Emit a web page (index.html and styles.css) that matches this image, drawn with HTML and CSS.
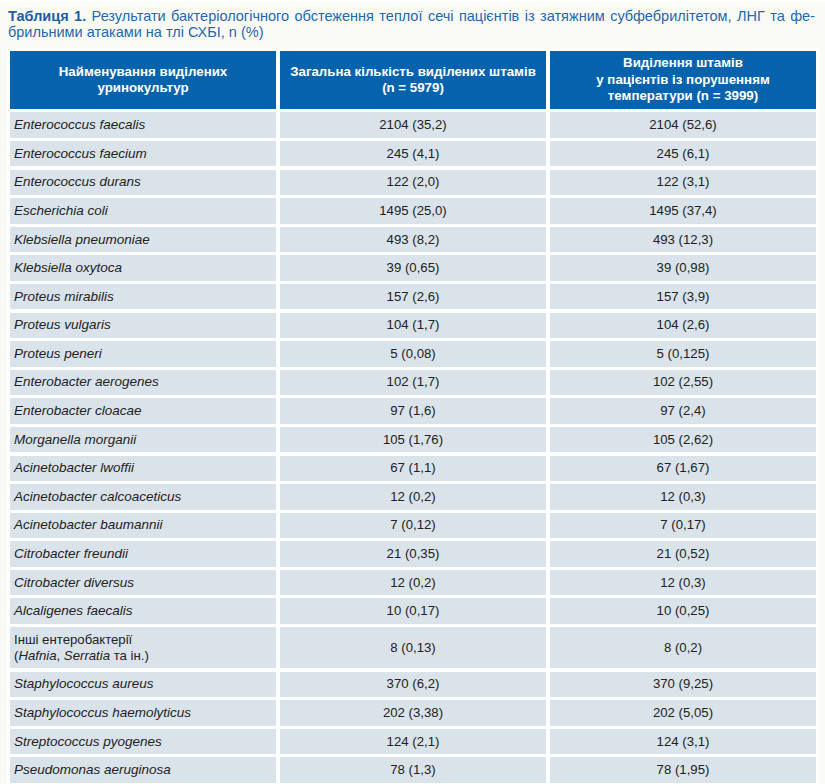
FILE: index.html
```html
<!DOCTYPE html>
<html lang="uk">
<head>
<meta charset="utf-8">
<title>Таблиця 1</title>
<link rel="stylesheet" href="styles.css">
</head>
<body>
<div class="page">
  <div class="caption">
    <span class="line1"><b>Таблиця 1.</b> Результати бактеріологічного обстеження теплої сечі пацієнтів із затяжним субфебрилітетом, ЛНГ та фе-</span>
    <span class="line2">брильними атаками на тлі СХБІ, n (%)</span>
  </div>
  <div class="table">
    <div class="th">Найменування виділених<br>уринокультур</div>
    <div class="th">Загальна кількість виділених штамів<br>(n = 5979)</div>
    <div class="th">Виділення штамів<br>у пацієнтів із порушенням<br>температури (n = 3999)</div>

    <div class="td name">Enterococcus faecalis</div><div class="td">2104 (35,2)</div><div class="td">2104 (52,6)</div>
    <div class="td name">Enterococcus faecium</div><div class="td">245 (4,1)</div><div class="td">245 (6,1)</div>
    <div class="td name">Enterococcus durans</div><div class="td">122 (2,0)</div><div class="td">122 (3,1)</div>
    <div class="td name">Escherichia coli</div><div class="td">1495 (25,0)</div><div class="td">1495 (37,4)</div>
    <div class="td name">Klebsiella pneumoniae</div><div class="td">493 (8,2)</div><div class="td">493 (12,3)</div>
    <div class="td name">Klebsiella oxytoca</div><div class="td">39 (0,65)</div><div class="td">39 (0,98)</div>
    <div class="td name">Proteus mirabilis</div><div class="td">157 (2,6)</div><div class="td">157 (3,9)</div>
    <div class="td name">Proteus vulgaris</div><div class="td">104 (1,7)</div><div class="td">104 (2,6)</div>
    <div class="td name">Proteus peneri</div><div class="td">5 (0,08)</div><div class="td">5 (0,125)</div>
    <div class="td name">Enterobacter aerogenes</div><div class="td">102 (1,7)</div><div class="td">102 (2,55)</div>
    <div class="td name">Enterobacter cloacae</div><div class="td">97 (1,6)</div><div class="td">97 (2,4)</div>
    <div class="td name">Morganella morganii</div><div class="td">105 (1,76)</div><div class="td">105 (2,62)</div>
    <div class="td name">Acinetobacter lwoffii</div><div class="td">67 (1,1)</div><div class="td">67 (1,67)</div>
    <div class="td name">Acinetobacter calcoaceticus</div><div class="td">12 (0,2)</div><div class="td">12 (0,3)</div>
    <div class="td name">Acinetobacter baumannii</div><div class="td">7 (0,12)</div><div class="td">7 (0,17)</div>
    <div class="td name">Citrobacter freundii</div><div class="td">21 (0,35)</div><div class="td">21 (0,52)</div>
    <div class="td name">Citrobacter diversus</div><div class="td">12 (0,2)</div><div class="td">12 (0,3)</div>
    <div class="td name">Alcaligenes faecalis</div><div class="td">10 (0,17)</div><div class="td">10 (0,25)</div>
    <div class="td name plain"><span>Інші ентеробактерії<br>(<i>Hafnia</i>, <i>Serratia</i> та ін.)</span></div><div class="td">8 (0,13)</div><div class="td">8 (0,2)</div>
    <div class="td name">Staphylococcus aureus</div><div class="td">370 (6,2)</div><div class="td">370 (9,25)</div>
    <div class="td name">Staphylococcus haemolyticus</div><div class="td">202 (3,38)</div><div class="td">202 (5,05)</div>
    <div class="td name">Streptococcus pyogenes</div><div class="td">124 (2,1)</div><div class="td">124 (3,1)</div>
    <div class="td name">Pseudomonas aeruginosa</div><div class="td">78 (1,3)</div><div class="td">78 (1,95)</div>
  </div>
</div>
</body>
</html>
```

FILE: styles.css
```css
html, body {
  margin: 0;
  padding: 0;
  background: #fbfbf5;
}

.page {
  width: 825px;
  height: 784px;
  overflow: hidden;
  border-top: 2px solid #ffffff;
  box-sizing: border-box;
}

.caption {
  margin: 6px 10px 0 8px;
  font-family: "Liberation Sans", Arial, sans-serif;
  font-size: 14.5px;
  line-height: 16px;
  color: #2367b0;
  height: 40px;
}

.caption span {
  display: block;
}

.line1 {
  text-align: justify;
  text-align-last: justify;
}

.caption b {
  color: #1a5ea6;
}

.table {
  margin-left: 7px;
  width: 812px;
  box-sizing: border-box;
  padding: 3px;
  background: #ffffff;
  display: grid;
  grid-template-columns: 266px 266px 266px;
  grid-template-rows: 58.3px repeat(18, 25.5px) 41.4px repeat(4, 25.5px);
  column-gap: 4px;
  row-gap: 3.1px;
  font-family: "Liberation Sans", Arial, sans-serif;
}

.th {
  background: #0563ad;
  color: #ffffff;
  font-weight: bold;
  font-size: 13.3px;
  line-height: 16.5px;
  text-align: center;
  display: flex;
  align-items: center;
  justify-content: center;
}

.td {
  background: #dae3ea;
  color: #222222;
  font-size: 13.2px;
  line-height: 16px;
  display: flex;
  align-items: center;
  justify-content: center;
}

.name {
  justify-content: flex-start;
  padding-left: 4px;
  font-style: italic;
  font-size: 13.5px;
}

.plain {
  font-style: normal;
  font-size: 13.2px;
}
```
